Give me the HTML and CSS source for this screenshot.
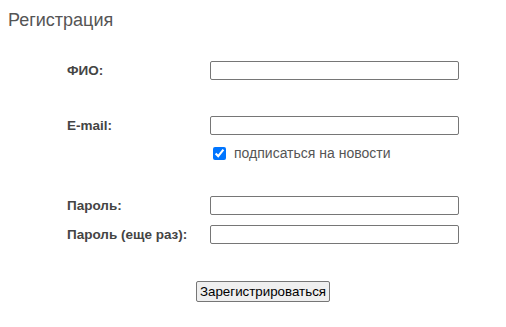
FILE: index.html
```html
<!DOCTYPE html>
<html lang="ru">
<head>
<meta charset="utf-8">
<title>Регистрация</title>
<link rel="stylesheet" href="styles.css">
</head>
<body>
<h1 class="title">Регистрация</h1>
<form class="form">
  <div class="row">
    <label class="label" for="fio">ФИО:</label>
    <input class="field" id="fio" type="text">
  </div>
  <div class="row row-email">
    <label class="label" for="email">E-mail:</label>
    <input class="field" id="email" type="text">
  </div>
  <div class="row row-check">
    <span class="label"></span>
    <label class="check"><input class="box" type="checkbox" checked>подписаться на новости</label>
  </div>
  <div class="row row-pass">
    <label class="label" for="p1">Пароль:</label>
    <input class="field" id="p1" type="password">
  </div>
  <div class="row row-pass2">
    <label class="label" for="p2">Пароль (еще раз):</label>
    <input class="field" id="p2" type="password">
  </div>
  <div class="actions">
    <button class="submit" type="button">Зарегистрироваться</button>
  </div>
</form>
</body>
</html>
```

FILE: styles.css
```css
html, body {
  margin: 0;
  padding: 0;
  background: #fff;
}
body {
  font-family: "Liberation Sans", Arial, sans-serif;
  color: #444;
}
.title {
  margin: 10px 0 0 8px;
  font-size: 18px;
  line-height: 20px;
  font-weight: normal;
  color: #555;
}
.form {
  margin: 31px 0 0 67px;
  width: 392px;
  display: flex;
  flex-direction: column;
}
.row {
  display: flex;
  align-items: center;
  height: 19px;
}
.label {
  width: 143px;
  flex: none;
  font-size: 13.5px;
  font-weight: bold;
  color: #444;
}
.field {
  box-sizing: border-box;
  width: 250px;
  height: 19px;
  margin: 0;
  padding: 1px 2px;
  border: 1px solid #767676;
  border-radius: 2px;
  font-size: 13px;
  background: #fff;
}
.row-email { margin-top: 36px; }
.row-check { margin-top: 11px; height: 14px; }
.check {
  display: flex;
  align-items: center;
  font-size: 14px;
  color: #555;
}
.box {
  width: 13px;
  height: 13px;
  margin: 0 8px 0 3px;
  accent-color: #0075ff;
}
.row-pass { margin-top: 36px; }
.row-pass2 { margin-top: 10px; }
.actions {
  margin-top: 37px;
  display: flex;
  justify-content: center;
}
.submit {
  margin: 0;
  height: 21px;
  padding: 1px 3px;
  font-family: "Liberation Sans", Arial, sans-serif;
  font-size: 13.33px;
  color: #000;
  background: #efefef;
  border: 1px solid #767676;
  border-radius: 2px;
}
```
